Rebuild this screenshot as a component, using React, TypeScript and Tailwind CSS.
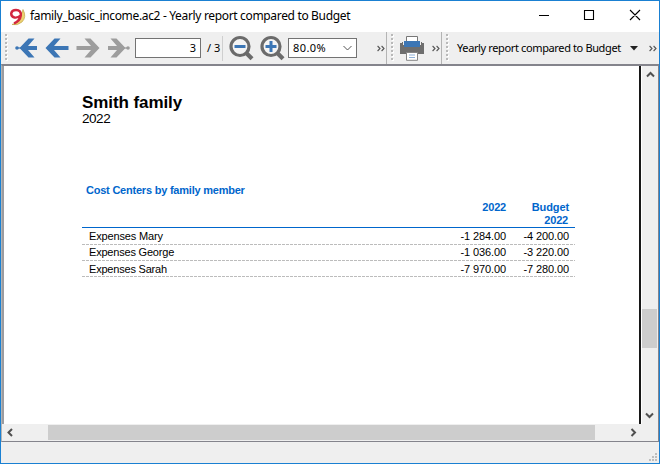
import React from "react";

const Grip = () => (
  <svg className="shrink-0" width="3" height="28" shapeRendering="crispEdges">
    {[0, 1, 2, 3, 4, 5, 6].map((i) => (
      <g key={i}>
        <rect x="1" y={i * 4 + 1} width="2" height="2" fill="#fff" />
        <rect x="0" y={i * 4} width="2" height="2" fill="#b9b9b9" />
      </g>
    ))}
  </svg>
);

const Arrow = ({ right = false, dot = false }: { right?: boolean; dot?: boolean }) => (
  <svg className="shrink-0" width="24" height="20" viewBox="0 0 24 20">
    <g transform={right ? "translate(24 0) scale(-1 1)" : undefined} fill={right ? "#9d9d9d" : "#3c76b5"}>
      {dot ? (
        <>
          <path d="M5.500 10 14.500 0.500H20.500L14 8H23V12H14L20.500 19.500H14.500Z" />
          <circle cx="3" cy="10" r="1.800" />
          <path d="M3 9.400H7V10.600H3Z" />
        </>
      ) : (
        <path d="M0.500 10 9.500 0.500H15.500L9 8H23.500V12H9L15.500 19.500H9.500Z" />
      )}
    </g>
  </svg>
);

const Magnifier = ({ plus = false }: { plus?: boolean }) => (
  <svg className="shrink-0" width="26" height="26" viewBox="0 0 26 26">
    <circle cx="11" cy="11.500" r="9" fill="#f4f4f4" stroke="#6b6b6b" strokeWidth="3.200" />
    <path d="M17 17.800 23 23.800" stroke="#6b6b6b" strokeWidth="4.200" />
    <path d={plus ? "M5.500 11.500H16.500M11 6V17" : "M5.500 11.500H16.500"} stroke="#3c76b5" strokeWidth="3" />
  </svg>
);

const More = () => (
  <svg className="shrink-0" width="8" height="7" viewBox="0 0 8 7">
    <path d="M.6 1 3 3.500.6 6M4.600 1 7 3.500 4.600 6" fill="none" stroke="#555" strokeWidth="1.100" />
  </svg>
);

const Separator = () => <div className="h-8 w-px shrink-0 bg-[#b4b4b4]" />;

const Printer = () => (
  <svg className="shrink-0" width="24" height="25" viewBox="0 0 24 25">
    <path d="M0 7H2V6H3V9H21V6H22V7H24V18H0Z" fill="#6e6e6e" />
    <path d="M6.500 8V.5H17.500V8" fill="#fff" stroke="#777" />
    <path d="M4 5H20V11H4Z" fill="#3c76b5" />
    <path d="M6.500 16.500H17.500V24.300H6.500Z" fill="#fff" stroke="#858585" />
    <path d="M9 19H15M9 21.500H15" stroke="#8fb1d8" />
  </svg>
);

const Logo = () => (
  <svg className="shrink-0" width="17" height="18" viewBox="0 0 17 18">
    <path d="M14 1.500Q18 9 13 14Q8.500 18 3 16.500Q8 15 10.500 12Z" fill="#ecd271" stroke="#b99a3a" strokeWidth=".6" />
    <path d="M11.500 7.500Q9 10 5.500 9.500Q2 8.500 2.200 5.200Q3 2 7 2Q12.300 2 11.800 7.500Q11 13 5 15.300" fill="none" stroke="#d3263f" strokeWidth="2.400" />
  </svg>
);

const Chevron = ({ d }: { d: string }) => (
  <svg className="shrink-0" width="9" height="9" viewBox="0 0 9 9">
    <path d={d} fill="none" stroke="#505050" strokeWidth="2" />
  </svg>
);

const rows = [
  { name: "Expenses Mary", actual: "-1 284.00", budget: "-4 200.00", line: "leading-[15px]", spacing: "tracking-[-0.15px]" },
  { name: "Expenses George", actual: "-1 036.00", budget: "-3 220.00", line: "leading-[15px]", spacing: "tracking-[-0.2px]" },
  { name: "Expenses Sarah", actual: "-7 970.00", budget: "-7 280.00", line: "leading-[17px]", spacing: "tracking-[-0.2px]" },
];

const Report = () => (
  <div className="ml-[78px] h-full w-[493px] pt-[28px] font-['Liberation_Sans',Arial,sans-serif] text-black">
    <div className="h-[17px] text-[17px] leading-[17px] font-bold tracking-[-0.08px]">Smith family</div>
    <div className="h-4 text-[13.5px] leading-4 tracking-[-0.45px]">2022</div>
    <div className="mt-[55px] ml-1 h-4 text-[11px] leading-4 font-bold tracking-[-0.22px] text-[#0066cc]">
      Cost Centers by family member
    </div>
    <div className="mt-[2px] flex h-[28px] border-b border-[#0066cc] text-right text-[11px] leading-[13px] font-bold text-[#0066cc]">
      <div className="w-[424px] pt-px tracking-[-0.2px]">2022</div>
      <div className="w-[63px] pt-px tracking-[-0.1px]">
        <div>Budget</div>
        <div className="pr-px tracking-[-0.2px]">2022</div>
      </div>
    </div>
    <div className="pt-px">
      {rows.map((r) => (
        <div key={r.name} className="flex h-4 flex-col">
          <div className={"flex h-[15px] shrink-0 text-[11px] " + r.line}>
            <div className={"w-[300px] pl-[7px] " + r.spacing}>{r.name}</div>
            <div className="w-[124px] text-right tracking-[-0.1px]">{r.actual}</div>
            <div className="w-[63px] text-right tracking-[-0.1px]">{r.budget}</div>
          </div>
          <div className="h-px shrink-0 bg-[repeating-linear-gradient(90deg,#bcbcbc_0_3px,transparent_3px_4px)]" />
        </div>
      ))}
    </div>
  </div>
);

export default function App() {
  return (
    <div className="flex h-[464px] w-[660px] flex-col overflow-hidden border border-[#1a80d2] bg-[#efefef] font-['Noto_Sans','Open_Sans',sans-serif] text-black">
      <header className="flex h-[31px] shrink-0 items-center bg-white pl-2">
        <Logo />
        <div className="-mt-px ml-1 w-[484px] text-[12px] whitespace-nowrap tracking-[-0.335px]">
          family_basic_income.ac2 - Yearly report compared to Budget
        </div>
        <svg width="120" height="12" viewBox="0 0 120 12" className="-mt-[3px] ml-[28px] shrink-0">
          <path d="M0 6.500H10M45.500 1.500H54.500V10.500H45.500ZM91 1 101 11M101 1 91 11" fill="none" stroke="#000" strokeWidth="1.100" />
        </svg>
      </header>

      <div className="flex h-8 shrink-0 items-center">
        <div className="ml-1 flex w-[384px] shrink-0 items-center">
          <Grip />
          <div className="ml-[6px] flex gap-[7px]"><Arrow dot /><Arrow /><Arrow right /><Arrow right dot /></div>
          <div className="ml-[4px] flex h-5 w-[66px] items-center justify-end border border-[#737373] bg-white pr-1 text-[11px]">3</div>
          <div className="ml-[6px] w-[15px] text-[11px] whitespace-nowrap">/ 3</div>
          <div className="h-[25px] w-px bg-[#cfcfcf]" />
          <div className="ml-[6px] flex gap-[5px]"><Magnifier /><Magnifier plus /></div>
          <div className="ml-[2px] flex h-5 w-[69px] items-center justify-between border border-[#737373] bg-white pr-1 pl-1 text-[11px]">
            <span className="tracking-[0.4px]">80.0%</span>
            <svg width="9" height="6" viewBox="0 0 9 6"><path d="M.5 1 4.500 5 8.500 1" fill="none" stroke="#555" /></svg>
          </div>
          <div className="ml-5"><More /></div>
        </div>
        <div className="ml-[-3px]"><Separator /></div>
        <div className="ml-1 flex items-center">
          <Grip />
          <div className="ml-[6px]"><Printer /></div>
          <div className="ml-2"><More /></div>
        </div>
        <div className="ml-[1px]"><Separator /></div>
        <div className="ml-1 flex flex-1 items-center">
          <Grip />
          <div className="ml-[8px] w-[165px] text-[11px] whitespace-nowrap tracking-[-0.37px]">Yearly report compared to Budget</div>
          <svg className="ml-[8px]" width="8" height="5"><path d="M0 0H8L4 4.500Z" fill="#222" /></svg>
          <div className="ml-[11px]"><More /></div>
        </div>
      </div>

      <main className="flex h-[378px] shrink-0 flex-col border border-t-2 border-b border-[#84848c] border-l-[#b5b5b5]">
        <div className="flex h-[358px] shrink-0">
          <div className="w-[2px] bg-[#9c9ca0]" />
          <div className="w-[635px] overflow-hidden bg-white"><Report /></div>
          <div className="w-[2px] bg-[#171717]" />
          <div className="w-px bg-white" />
          <div className="flex w-4 flex-col items-center pt-1 pb-1">
            <Chevron d="M1 6.500 4.500 3 8 6.500" />
            <div className="mt-[230px] mr-px h-[39px] w-[15px] bg-[#cdcdcd]" />
            <div className="mt-auto mr-px"><Chevron d="M1 2.500 4.500 6 8 2.500" /></div>
          </div>
        </div>
        <div className="flex h-[17px] items-center pl-1">
          <Chevron d="M6 1 2.500 4.500 6 8" />
          <div className="ml-[33px] h-[15px] w-[547px] bg-[#cdcdcd]" />
          <div className="ml-[34px]"><Chevron d="M2.500 1 6 4.500 2.500 8" /></div>
        </div>
      </main>
      <footer className="flex flex-1 items-end justify-end pr-[2px] pb-[2px]">
        <svg width="8" height="8" shapeRendering="crispEdges"><path d="M6 0h2v2H6ZM3 3h2v2H3ZM6 3h2v2H6ZM0 6h2v2H0ZM3 6h2v2H3ZM6 6h2v2H6Z" fill="#bdbdbd" /></svg>
      </footer>
    </div>
  );
}
